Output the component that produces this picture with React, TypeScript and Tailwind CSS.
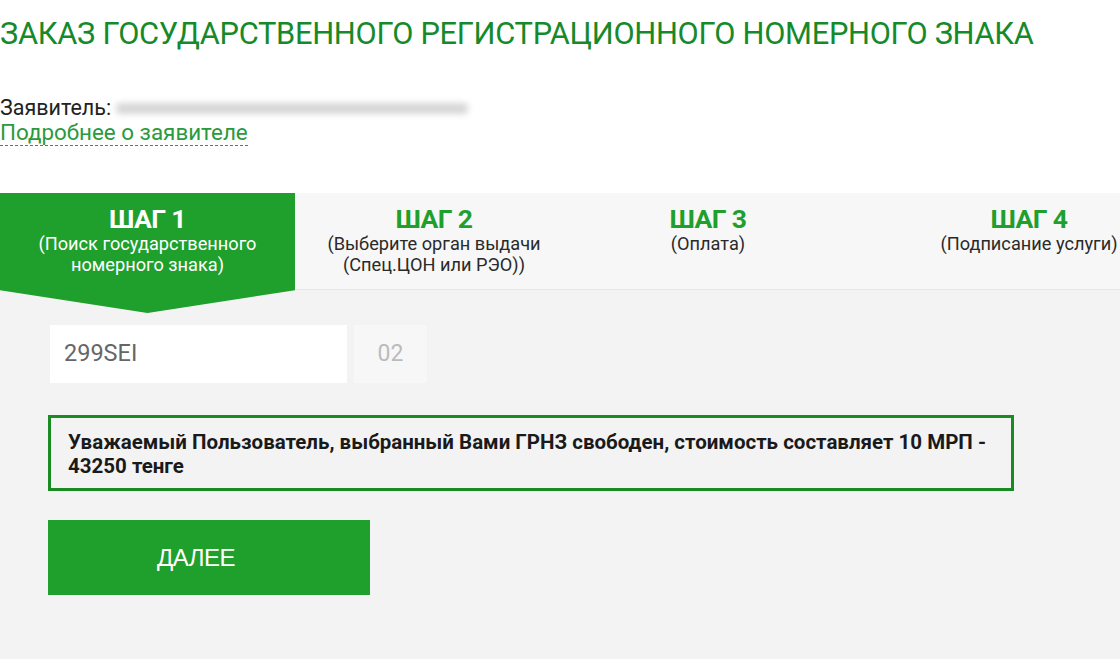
import React from "react";

export default function App() {
  return (
    <div className="w-[1120px] h-[663px] overflow-hidden bg-white font-['Roboto',sans-serif]">
      <div className="h-[193px]">
        <h1 className="pt-[14px] text-[30.8px] leading-[40px] text-[#168a2b] whitespace-nowrap tracking-[-0.3px]">
          ЗАКАЗ ГОСУДАРСТВЕННОГО РЕГИСТРАЦИОННОГО НОМЕРНОГО ЗНАКА
        </h1>
        <div className="mt-[42px] text-[21.5px] leading-[24px] text-[#222] flex items-center">
          <span>Заявитель:</span>
          <span className="ml-[5px] w-[352px] h-[11px] rounded bg-[#d6d6d6] blur-[3px]" />
        </div>
        <div className="leading-[24px]">
          <a className="text-[22.4px] leading-[24px] text-[#2a9a3c] border-b border-dashed border-[#2a9a3c]">
            Подробнее о заявителе
          </a>
        </div>
      </div>

      <div className="relative">
        <div className="flex h-[97px] bg-[#f7f7f7] border-b border-[#e6e6e6]">
          <div className="relative w-[295px] shrink-0">
            <div className="absolute inset-x-0 top-0 h-[120px] bg-[#1f9f2c] [clip-path:polygon(0_0,100%_0,100%_81%,50%_100%,0_81%)] z-10" />
            <div className="relative z-20 text-center text-white pt-[12px]">
              <div className="text-[26.5px] leading-[28px] font-bold tracking-[-0.6px]">ШАГ 1</div>
              <div className="text-[18.2px] leading-[21px]">(Поиск государственного<br />номерного знака)</div>
            </div>
          </div>
          <div className="w-[278px] shrink-0 text-center pt-[12px]">
            <div className="text-[26.5px] leading-[28px] font-bold text-[#1f9f2c] tracking-[-0.6px]">ШАГ 2</div>
            <div className="text-[18.2px] leading-[21px] text-[#2a2a2a]">(Выберите орган выдачи<br />(Спец.ЦОН или РЭО))</div>
          </div>
          <div className="w-[270px] shrink-0 text-center pt-[12px]">
            <div className="text-[26.5px] leading-[28px] font-bold text-[#1f9f2c] tracking-[-0.6px]">ШАГ 3</div>
            <div className="text-[18.2px] leading-[21px] text-[#2a2a2a]">(Оплата)</div>
          </div>
          <div className="w-[372px] shrink-0 text-center pt-[12px]">
            <div className="text-[26.5px] leading-[28px] font-bold text-[#1f9f2c] tracking-[-0.6px]">ШАГ 4</div>
            <div className="text-[18.2px] leading-[21px] text-[#2a2a2a]">(Подписание услуги)</div>
          </div>
        </div>

        <div className="bg-[#f3f3f3] h-[369px] pl-[50px] pt-[35px]">
          <div className="flex gap-[7px]">
            <div className="w-[297px] h-[58px] bg-white flex items-center pl-[14px] text-[23.5px] text-[#666]">299SEI</div>
            <div className="w-[73px] h-[58px] bg-[#f7f7f7] flex items-center justify-center text-[23px] text-[#bbb]">02</div>
          </div>
          <div className="mt-[32px] -ml-[2px] w-[966px] border-[3px] border-[#1a8a22] px-[17px] pt-[12px] pb-[10px] text-[20.5px] leading-[24px] font-bold text-[#1a1a1a] whitespace-nowrap">
            Уважаемый Пользователь, выбранный Вами ГРНЗ свободен, стоимость составляет 10 МРП -<br />43250 тенге
          </div>
          <button className="mt-[29px] -ml-[2px] w-[322px] h-[75px] bg-[#1f9f2c] text-white text-[24px] font-['Liberation_Sans',sans-serif] tracking-[-0.5px] flex items-center pl-[109px]">
            ДАЛЕЕ
          </button>
        </div>
      </div>
    </div>
  );
}
